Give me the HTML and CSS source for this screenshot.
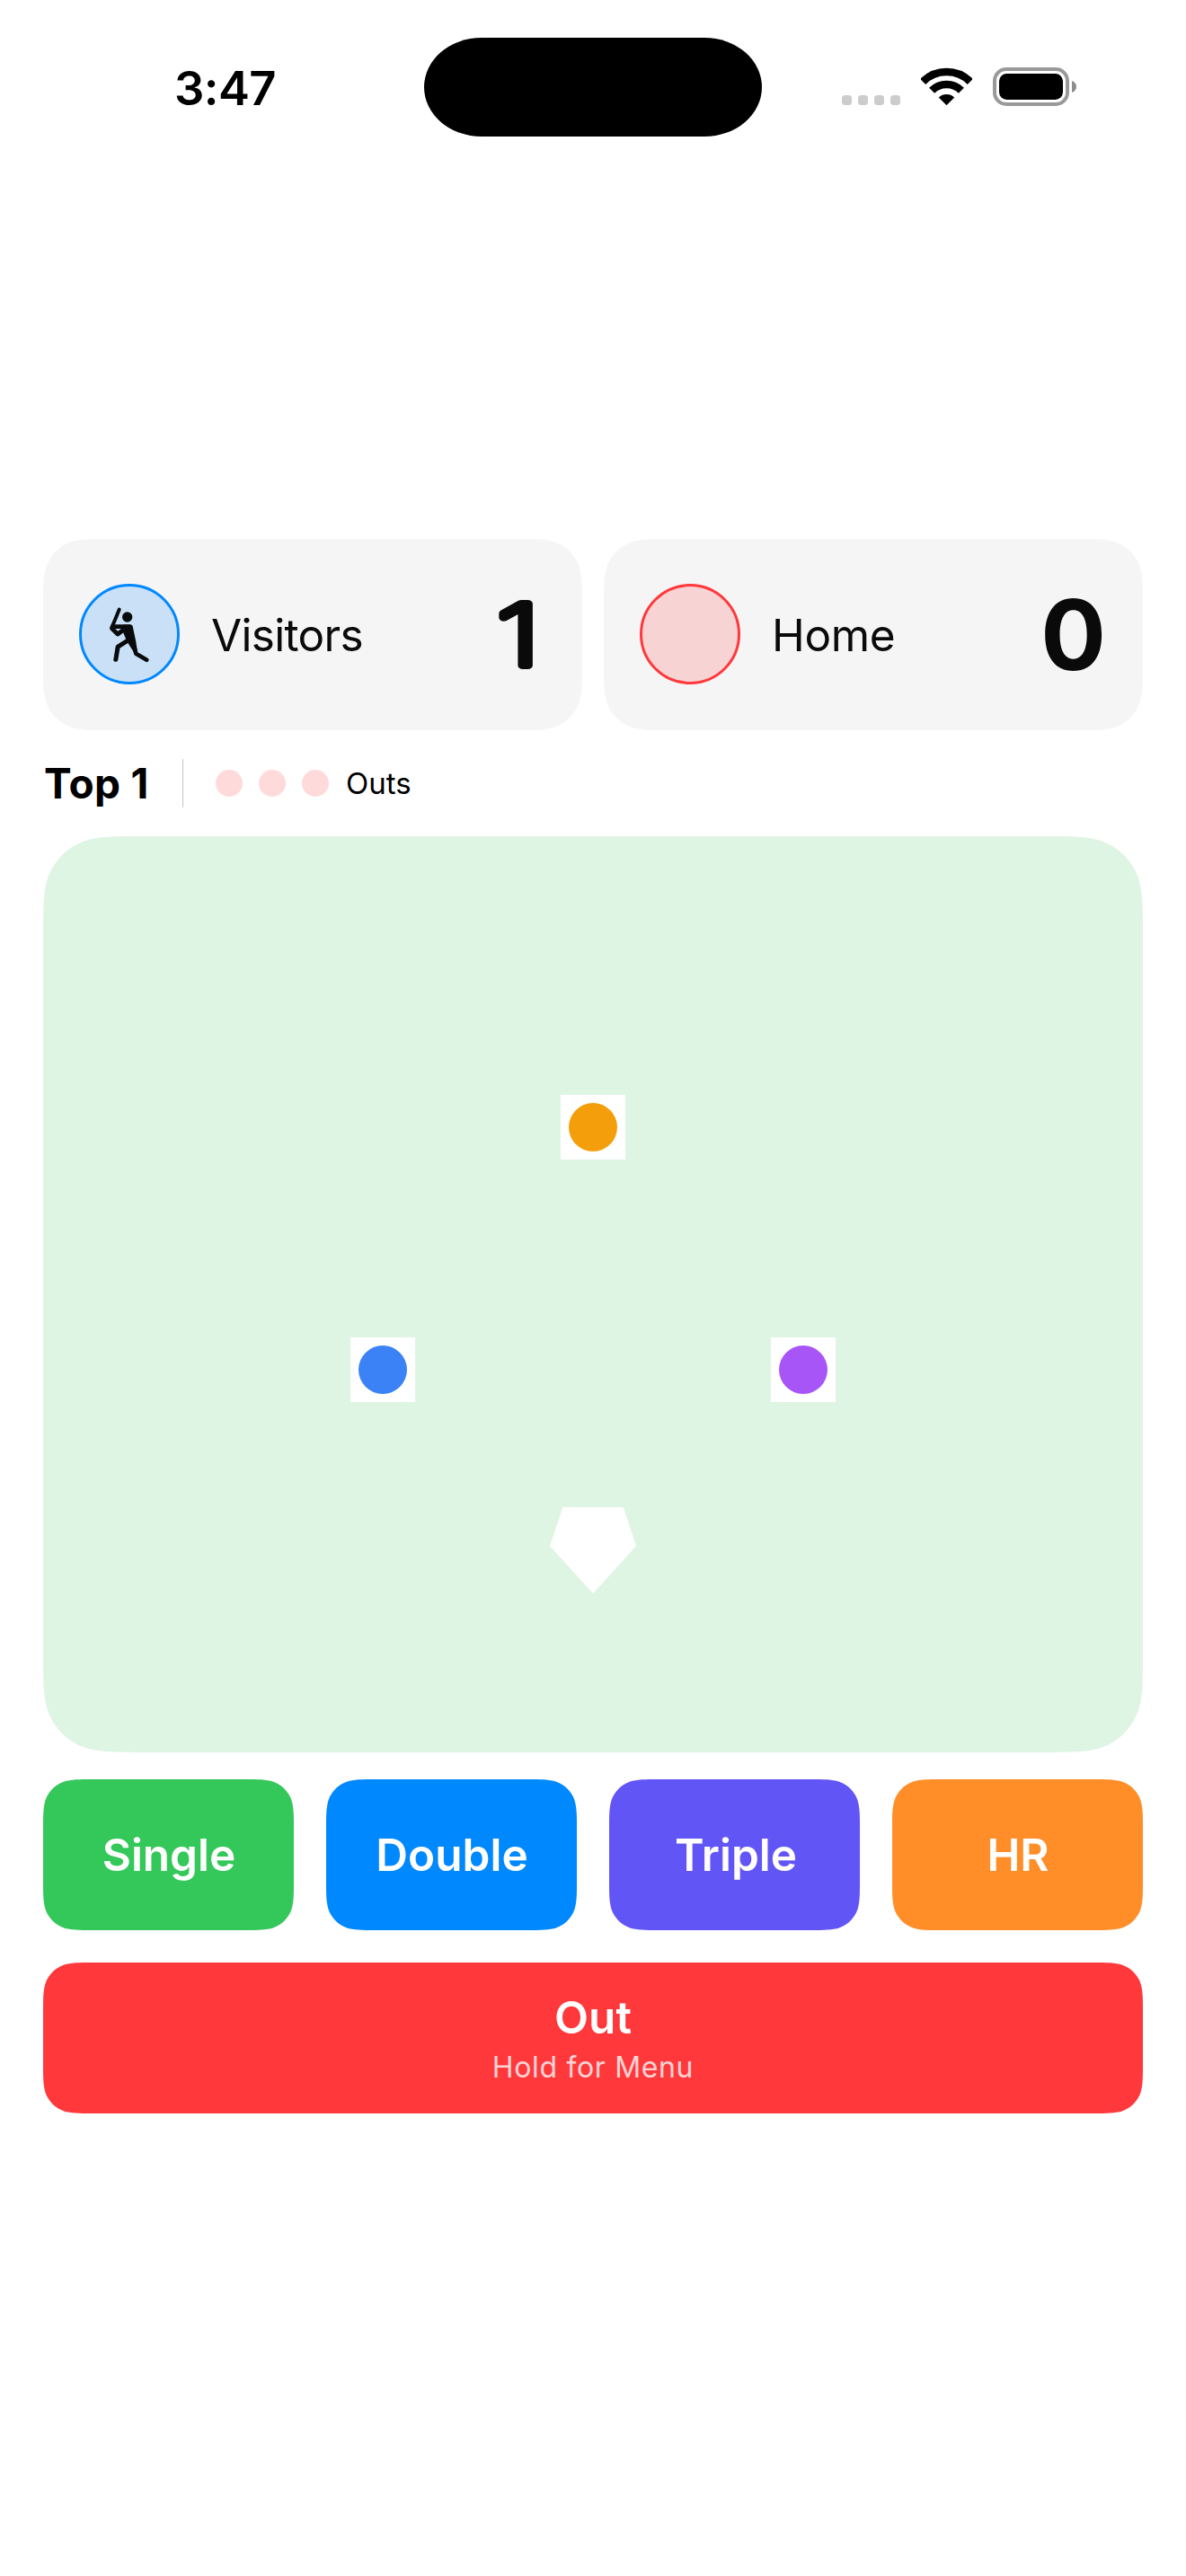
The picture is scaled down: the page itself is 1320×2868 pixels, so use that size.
FILE: index.html
```
<!DOCTYPE html>
<html lang="en">
<head>
<meta charset="utf-8">
<title>Scoreboard</title>
<link rel="stylesheet" href="styles.css">
</head>
<body>
<header class="status">
  <span class="time">3:47</span>
  <div class="island"></div>
  <div class="indicators">
    <div class="signal"><i></i><i></i><i></i><i></i></div>
    <svg class="wifi" viewBox="375 74 172 129">
      <path d="M381.5 121.5A112.5 112.5 0 0 1 540.5 121.5" fill="none" stroke="#000" stroke-width="26"/>
      <path d="M411.5 151.5A70 70 0 0 1 510.5 151.5" fill="none" stroke="#000" stroke-width="26"/>
      <path d="M461 201L434.500 174.500A39 39 0 0 1 487.500 174.500Z"/>
    </svg>
    <svg class="battery" viewBox="0 0 94 43">
      <rect x="2" y="2" width="81" height="39" rx="13" fill="none" stroke="#999" stroke-width="4"/>
      <rect x="7" y="7" width="71" height="29" rx="8.500"/>
      <path d="M88 15C91 16 93 18.500 93 21.500S91 27 88 28Z" fill="#8c8c8c"/>
    </svg>
  </div>
</header>

<main class="game">
  <section class="teams">
    <div class="team">
      <div class="avatar visitors">
        <svg class="batter" viewBox="117 82 150 200" fill="none" stroke="#0a0b0c" stroke-linecap="round" stroke-linejoin="round">
          <path d="M158 99L133 160" stroke-width="12"/>
          <circle cx="185" cy="124" r="17" fill="#0a0b0c" stroke="none"/>
          <path d="M135 156H192" stroke-width="14"/>
          <path d="M134 162L153 181L174 165" stroke-width="15"/>
          <path d="M175 155.500H197L208 207L213 240L190 204L178 176Z" fill="#0a0b0c" stroke-width="12"/>
          <path d="M190 200L153.500 223L146.500 266" stroke-width="15"/>
          <path d="M206 215L214 246L250 267" stroke-width="14"/>
        </svg>
      </div>
      <span class="name">Visitors</span>
      <svg class="score-one" viewBox="0 0 56 80"><text transform="translate(1.700 74.300) scale(1.330 1)">1</text></svg>
    </div>
    <div class="team">
      <div class="avatar home"></div>
      <span class="name home-name">Home</span>
      <span class="score">0</span>
    </div>
  </section>

  <section class="inning">
    <span class="half">Top 1</span>
    <div class="divider"></div>
    <div class="outs"><i></i><i></i><i></i></div>
    <span class="outs-label">Outs</span>
  </section>

  <section class="field">
    <div class="base second"><i></i></div>
    <div class="base third"><i></i></div>
    <div class="base first"><i></i></div>
    <div class="plate"></div>
  </section>

  <section class="hits">
    <button class="hit single">Single</button>
    <button class="hit double">Double</button>
    <button class="hit triple">Triple</button>
    <button class="hit homer">HR</button>
  </section>

  <button class="out">
    <span class="out-title">Out</span>
    <span class="out-hint">Hold for Menu</span>
  </button>
</main>
</body>
</html>
```
FILE: styles.css
```
* { box-sizing: border-box; }

body {
  margin: 0;
  min-height: 2868px;
  background: #fff;
  color: #000;
  font-family: Inter, "Liberation Sans", sans-serif;
}

svg { display: block; }

/* Status bar */
.status {
  display: grid;
  grid-template-columns: 472px 376px 472px;
  height: 600px;
  padding-top: 42px;
  align-items: start;
}
.time {
  padding-left: 194px;
  margin-top: 26px;
  font-size: 52.5px;
  font-weight: 600;
  line-height: 60px;
  letter-spacing: -0.6px;
}
.island {
  height: 110px;
  border-radius: 64px / 55px;
  background: #000;
}
.indicators {
  display: flex;
  padding: 33px 0 0 89px;
}
.signal {
  display: flex;
  gap: 7px;
  padding-top: 31px;
}
.signal i {
  width: 11px;
  height: 11px;
  border-radius: 3.5px;
  background: #ccc;
}
.wifi {
  width: 57px;
  height: 43px;
  margin-left: 23px;
}
.battery {
  width: 94px;
  height: 43px;
  margin-left: 23px;
}

/* Game layout */
.game {
  display: flex;
  flex-direction: column;
  padding: 0 48px;
}
.teams {
  display: flex;
  gap: 24px;
}
.team {
  display: flex;
  align-items: center;
  width: 600px;
  height: 213px;
  padding: 0 41px 0 40px;
  background: #f5f5f5;
  color: #0a0a0a;
  clip-path: path("M73.4 0H526.6C547.8 0 558.3 0 569.7 3.6C582.1 8.100 591.9 17.9 596.4 30.3C600 41.7 600 52.2 600 73.4V139.6C600 160.8 600 171.3 596.4 182.7C591.9 195.1 582.1 204.9 569.7 209.4C558.3 213 547.8 213 526.6 213H73.4C52.2 213 41.7 213 30.3 209.4C17.9 204.9 8.100 195.1 3.6 182.7C0 171.3 0 160.8 0 139.6V73.4C0 52.2 0 41.7 3.6 30.3C8.100 17.9 17.9 8.100 30.3 3.6C41.7 0 52.2 0 73.4 0Z");
}
.avatar {
  display: flex;
  align-items: center;
  justify-content: center;
  width: 112px;
  height: 112px;
  margin-bottom: 1px;
  border: 3px solid;
  border-radius: 50%;
}
.visitors { border-color: #08f; background: #c9e0f7; }
.home { border-color: #ff383c; background: #f7d3d4; }
.batter { width: 50px; height: 66.7px; }
.name {
  flex: 1;
  padding-left: 35px;
  font-size: 49.5px;
  line-height: 60px;
  letter-spacing: -0.7px;
}
.home-name { letter-spacing: -0.4px; }
.score {
  font-size: 108px;
  font-weight: 700;
  line-height: 120px;
}
.score-one { width: 56px; height: 80px; overflow: visible; }
.score-one text {
  font-size: 95px;
  font-weight: 200;
  fill: #0a0a0a;
  stroke: #0a0a0a;
  stroke-width: 9.5px;
  stroke-linejoin: round;
  vector-effect: non-scaling-stroke;
}

/* Inning row */
.inning {
  display: flex;
  align-items: center;
  height: 54px;
  margin-top: 32px;
}
.half {
  width: 155px;
  padding-left: 1px;
  font-size: 46px;
  font-weight: 650;
  line-height: 54px;
  letter-spacing: 0.3px;
}
.divider {
  width: 1px;
  height: 54px;
  background: #c6c6c8;
}
.outs {
  display: flex;
  gap: 18px;
  margin-left: 36px;
}
.outs i {
  width: 30px;
  height: 30px;
  border-radius: 50%;
  background: #ffdadb;
}
.outs-label {
  margin: -1px 0 0 19px;
  font-size: 33px;
  line-height: 40px;
}

/* Field */
.field {
  position: relative;
  height: 1020px;
  margin-top: 32px;
  background: #dff5e4;
  clip-path: path("M110.1 0H1113.9C1145.6 0 1161.5 0 1178.5 5.4C1197.2 12.2 1211.8 26.8 1218.6 45.5C1224 62.5 1224 78.4 1224 110.1V909.9C1224 941.6 1224 957.5 1218.6 974.5C1211.8 993.2 1197.2 1007.8 1178.5 1014.6C1161.5 1020 1145.6 1020 1113.9 1020H110.1C78.4 1020 62.5 1020 45.5 1014.6C26.8 1007.8 12.2 993.2 5.4 974.5C0 957.5 0 941.6 0 909.9V110.1C0 78.4 0 62.5 5.4 45.5C12.2 26.8 26.8 12.2 45.5 5.4C62.5 0 78.4 0 110.1 0Z");
}
.base {
  position: absolute;
  display: flex;
  align-items: center;
  justify-content: center;
  width: 72px;
  height: 72px;
  background: #fff;
}
.base i {
  width: 54px;
  height: 54px;
  border-radius: 50%;
}
.second { left: 576px; top: 288px; }
.second i { background: #f59e0b; }
.third { left: 342px; top: 558px; }
.third i { background: #3b82f6; }
.first { left: 810px; top: 558px; }
.first i { background: #a855f7; }
.plate {
  position: absolute;
  left: 564px;
  top: 747px;
  width: 96px;
  height: 96px;
  background: #fff;
  clip-path: polygon(15% 0, 85% 0, 100% 45%, 50% 100%, 0 45%);
}

/* Buttons */
button {
  border: 0;
  padding: 0;
  color: #fff;
  font-family: inherit;
}
.hits {
  display: flex;
  gap: 36px;
  margin-top: 30px;
}
.hit {
  width: 279px;
  height: 168px;
  padding-left: 1px;
  font-size: 49.5px;
  font-weight: 600;
  line-height: 60px;
  clip-path: path("M55 0H224C239.8 0 247.7 0 256.3 2.7C265.6 6.100 272.9 13.4 276.3 22.7C279 31.3 279 39.2 279 55V113C279 128.8 279 136.7 276.3 145.3C272.9 154.6 265.6 161.9 256.3 165.3C247.7 168 239.8 168 224 168H55C39.2 168 31.3 168 22.7 165.3C13.4 161.9 6.100 154.6 2.7 145.3C0 136.7 0 128.8 0 113V55C0 39.2 0 31.3 2.7 22.7C6.100 13.4 13.4 6.100 22.7 2.7C31.3 0 39.2 0 55 0Z");
}
.single { background: #34c759; }
.double { background: #08f; }
.triple { background: #6155f5; padding-left: 3px; }
.homer { background: #ff8d28; }
.out {
  display: flex;
  flex-direction: column;
  align-items: center;
  height: 168px;
  margin-top: 36px;
  padding-top: 31px;
  background: #ff383c;
  clip-path: path("M55 0H1169C1184.8 0 1192.7 0 1201.3 2.7C1210.6 6.100 1217.9 13.4 1221.3 22.7C1224 31.3 1224 39.2 1224 55V113C1224 128.8 1224 136.7 1221.3 145.3C1217.9 154.6 1210.6 161.9 1201.3 165.3C1192.7 168 1184.8 168 1169 168H55C39.2 168 31.3 168 22.7 165.3C13.4 161.9 6.100 154.6 2.7 145.3C0 136.7 0 128.8 0 113V55C0 39.2 0 31.3 2.7 22.7C6.100 13.4 13.4 6.100 22.7 2.7C31.3 0 39.2 0 55 0Z");
}
.out-title {
  font-size: 49.5px;
  font-weight: 600;
  line-height: 60px;
}
.out-hint {
  font-size: 32px;
  line-height: 40px;
  margin-top: 6px;
  letter-spacing: 0.65px;
  color: rgba(255, 255, 255, 0.8);
}
```
